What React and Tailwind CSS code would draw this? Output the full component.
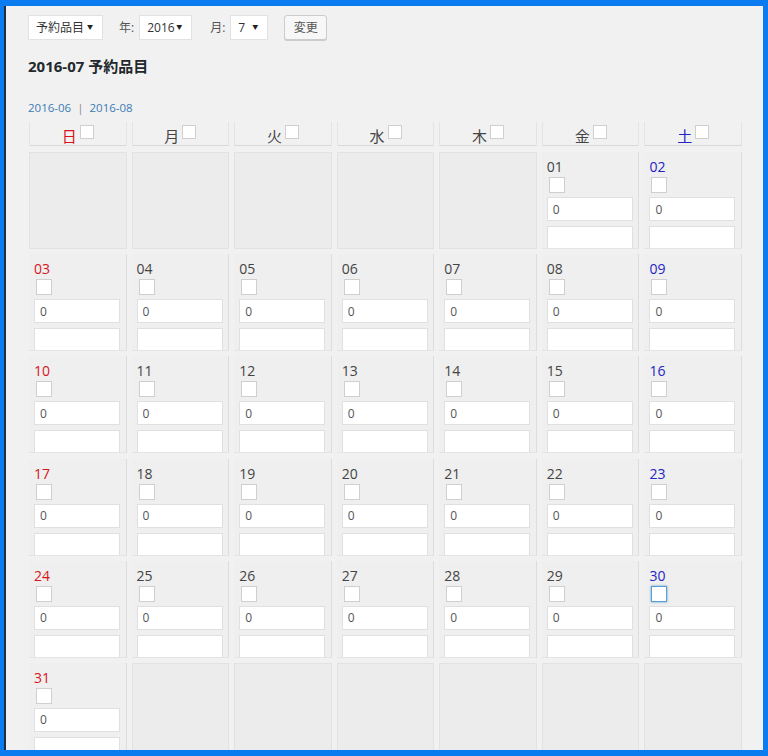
const font = "font-['Open_Sans','Noto_Sans_CJK_JP',sans-serif]"

const weekdays = [
  { label: '日', color: 'text-[#d8141c]' },
  { label: '月', color: 'text-[#444]' },
  { label: '火', color: 'text-[#444]' },
  { label: '水', color: 'text-[#444]' },
  { label: '木', color: 'text-[#444]' },
  { label: '金', color: 'text-[#444]' },
  { label: '土', color: 'text-[#2424c4]' },
]

// July 2016 starts on a Friday
const cells = []
for (let i = 0; i < 5; i++) cells.push(null)
for (let d = 1; d <= 31; d++) cells.push(d)
while (cells.length < 42) cells.push(null)

function Box({ focused }) {
  return (
    <span
      className={
        'block w-[16px] h-[16px] bg-white border ' +
        (focused ? 'border-[#5b9dd9] shadow-[0_0_2px_rgba(30,140,190,0.8)]' : 'border-[#cfcfcf]')
      }
    />
  )
}

function Select({ label, width }) {
  return (
    <div className={'h-[25px] bg-white border border-[#e2e2e2] flex items-center justify-between pl-[7px] pr-[9px] text-[12px] text-[#333] ' + width}>
      <span>{label}</span>
      <span className="text-[6px] text-[#222]">▼</span>
    </div>
  )
}

export default function App() {
  return (
    <div className={'w-[768px] h-[756px] bg-[#0b7cf0] pt-[6px] pl-[4px] pr-[5px] pb-[6px] ' + font}>
      <div className="h-full bg-[#f1f1f1] border-l-2 border-[#1c2d44] overflow-hidden pl-[22px] pt-[9px]">
        {/* toolbar */}
        <div className="flex items-center">
          <Select label="予約品目" width="w-[75px]" />
          <span className="ml-[16px] text-[12px] text-[#555]">年:</span>
          <div className="ml-[5px]"><Select label="2016" width="w-[53px]" /></div>
          <span className="ml-[18px] text-[12px] text-[#555]">月:</span>
          <div className="ml-[5px]"><Select label="7" width="w-[38px]" /></div>
          <button className="ml-[16px] h-[25px] w-[43px] bg-[#f7f7f7] border border-[#cccccc] rounded-[3px] shadow-[0_1px_0_#ccc] text-[12px] text-[#555]">
            変更
          </button>
        </div>

        <h2 className="mt-[16px] text-[15px] font-bold text-[#23282d] leading-[20px]">2016-07 予約品目</h2>

        <div className="mt-[25px] text-[11.5px] leading-[14px] text-[#3b7cb4]">
          <span>2016-06</span>
          <span className="text-[#888] mx-[6px]">|</span>
          <span>2016-08</span>
        </div>

        {/* header */}
        <div className="mt-[7px] w-[714px] grid grid-cols-7 gap-x-[5px] pl-[1px]">
          {weekdays.map(w => (
            <div key={w.label} className="h-[24px] border-x border-[#e4e4e4] border-b border-b-[#d9d9d9] flex justify-center pt-[3px]">
              <span className={'text-[15px] leading-[18px] mt-[2px] ' + w.color}>{w.label}</span>
              <span className="ml-[3px] block w-[14px] h-[14px] bg-white border border-[#cfcfcf]" />
            </div>
          ))}
        </div>

        {/* days */}
        <div className="mt-[6px] w-[714px] grid grid-cols-7 gap-x-[5px] gap-y-[5.2px] pl-[1px]">
          {cells.map((d, i) => {
            if (d === null) {
              return <div key={i} className="h-[97px] bg-[#ececec] border border-[#e2e2e2]" />
            }
            const col = i % 7
            const color = col === 0 ? 'text-[#d8141c]' : col === 6 ? 'text-[#2424c4]' : 'text-[#444]'
            return (
              <div key={i} className="h-[97px] overflow-hidden bg-[#efefef] border-r border-[#dddddd] border-b border-b-[#e4e4e4] pl-[5px] pt-[5px]">
                <div className={'text-[14px] leading-[20px] ' + color}>{String(d).padStart(2, '0')}</div>
                <div className="pl-[2px]"><Box focused={d === 30} /></div>
                <input
                  readOnly
                  value="0"
                  className="mt-[4px] block w-[86px] h-[24px] bg-white border border-[#e0e0e0] pl-[5px] text-[12px] text-[#555] outline-none"
                />
                <input
                  readOnly
                  value=""
                  className="mt-[5px] block w-[86px] h-[24px] bg-white border border-[#e0e0e0] outline-none"
                />
              </div>
            )
          })}
        </div>
      </div>
    </div>
  )
}
